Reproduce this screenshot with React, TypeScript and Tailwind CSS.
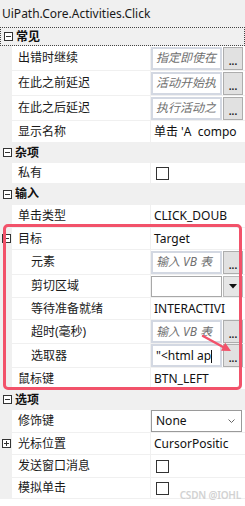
import React from "react";

const font = "font-['Noto_Sans','Noto_Sans_CJK_SC',sans-serif]";

const Toggle = ({ open }: { open: boolean }) => (
  <svg width="9" height="9" viewBox="0 0 9 9" className="block">
    <rect x="0.5" y="0.5" width="8" height="8" fill="white" stroke="#333" />
    <line x1="2" y1="4.5" x2="7" y2="4.5" stroke="#333" />
    {!open && <line x1="4.5" y1="2" x2="4.5" y2="7" stroke="#333" />}
  </svg>
);

const Header = ({ title, h, focused }: { title: string; h: string; focused?: boolean }) => (
  <div
    className={`flex items-center ${h} bg-[#f0f0f0] ${
      focused ? "border border-dotted border-[#444]" : "border-b border-[#f0f0f0]"
    }`}
  >
    <div className="w-[14px] flex justify-center pl-[1px]">
      <Toggle open />
    </div>
    <span className="text-[12px] font-bold text-[#111] pl-[1px]">{title}</span>
  </div>
);

const Row = ({
  name,
  h,
  sub,
  toggle,
  children,
}: {
  name: string;
  h: string;
  sub?: boolean;
  toggle?: "open" | "closed";
  children?: React.ReactNode;
}) => (
  <div className={`flex ${h} border-b border-[#f0f0f0]`}>
    <div className="w-[12px] shrink-0 bg-[#f0f0f0] flex items-center justify-center">
      {toggle && <Toggle open={toggle === "open"} />}
    </div>
    <div
      className={`w-[139px] shrink-0 bg-white border-r border-[#f0f0f0] flex items-center text-[12px] text-[#1a1a1a] ${
        sub ? "pl-[19px]" : "pl-[6px]"
      }`}
    >
      {name}
    </div>
    <div className="flex-1 bg-white flex items-center min-w-0">{children}</div>
  </div>
);

const Text = ({ v }: { v: string }) => (
  <div className="w-[76px] pl-[3px] whitespace-pre text-[12px] text-[#111]">{v}</div>
);

const Dots = () => (
  <div className="shrink-0 ml-[1px] w-[20px] h-[23px] bg-[#e1e1e1] border border-[#adadad] flex items-end justify-center pb-[3px]">
    <span className="text-[10px] leading-none font-bold text-[#222]">...</span>
  </div>
);

const Edit = ({ v, hint }: { v: string; hint?: boolean }) => (
  <div className="flex items-center">
    <div className="shrink-0 w-[71px] h-[23px] border-2 border-[#d3d8e2] bg-white flex items-center pl-[3px] whitespace-nowrap">
      {hint ? (
        <span className="italic text-[12px] text-[#707070]">{v}</span>
      ) : (
        <span className="text-[12px] text-[#111]">
          {v}
          <span className="inline-block w-px h-[13px] bg-[#111] align-middle" />
        </span>
      )}
    </div>
    <Dots />
  </div>
);

const Check = () => <div className="ml-[5px] w-[13px] h-[13px] border border-[#333] bg-white" />;

export default function App() {
  return (
    <div className={`relative w-[245px] h-[506px] bg-white overflow-hidden ${font}`}>
      <div className="h-[27px] bg-[#f0f0f0] flex items-center pl-[2px] text-[12px] text-[#1a1a1a]">
        UiPath.Core.Activities.Click
      </div>

      <Header title="常见" h="h-[19px]" focused />
      <Row name="出错时继续" h="h-[25px]">
        <Edit v="指定即使在" hint />
      </Row>
      <Row name="在此之前延迟" h="h-[25px]">
        <Edit v="活动开始执" hint />
      </Row>
      <Row name="在此之后延迟" h="h-[25px]">
        <Edit v="执行活动之" hint />
      </Row>
      <Row name="显示名称" h="h-[22px]">
        <Text v="单击 'A  compo" />
      </Row>

      <Header title="杂项" h="h-[20px]" />
      <Row name="私有" h="h-[21px]">
        <Check />
      </Row>

      <Header title="输入" h="h-[21px]" />
      <Row name="单击类型" h="h-[23px]">
        <Text v="CLICK_DOUB" />
      </Row>
      <Row name="目标" h="h-[22px]" toggle="open">
        <Text v="Target" />
      </Row>
      <Row name="元素" h="h-[25px]" sub>
        <Edit v="输入 VB 表" hint />
      </Row>
      <Row name="剪切区域" h="h-[23px]" sub>
        <div className="flex items-center">
          <div className="shrink-0 w-[71px] h-[21px] border border-[#a8a8a8] bg-white" />
          <div className="shrink-0 ml-[1px] w-[20px] h-[21px] bg-[#e6e6e6] border border-[#b8b8b8] flex items-center justify-center">
            <svg width="8" height="5" viewBox="0 0 8 5">
              <path d="M0 0 H8 L4 4.5 Z" fill="#111" />
            </svg>
          </div>
        </div>
      </Row>
      <Row name="等待准备就绪" h="h-[22px]" sub>
        <Text v="INTERACTIVI" />
      </Row>
      <Row name="超时(毫秒)" h="h-[24px]" sub>
        <Edit v="输入 VB 表" hint />
      </Row>
      <Row name="选取器" h="h-[24px]" sub>
        <Edit v={'"<html ap'} />
      </Row>
      <Row name="鼠标键" h="h-[22px]">
        <Text v="BTN_LEFT" />
      </Row>

      <Header title="选项" h="h-[20px]" />
      <Row name="修饰键" h="h-[23px]">
        <div className="w-[91px] h-[22px] border border-[#9a9a9a] bg-white flex items-center justify-between pl-[4px] pr-[6px]">
          <span className="text-[12px] text-[#111]">None</span>
          <svg width="7" height="4" viewBox="0 0 7 4">
            <path d="M0.5 0.5 L3.5 3.5 L6.5 0.5" fill="none" stroke="#666" />
          </svg>
        </div>
      </Row>
      <Row name="光标位置" h="h-[22px]" toggle="closed">
        <Text v="CursorPositic" />
      </Row>
      <Row name="发送窗口消息" h="h-[23px]">
        <Check />
      </Row>
      <Row name="模拟单击" h="h-[21px]">
        <Check />
      </Row>

      <div className="absolute left-[3px] top-[224px] w-[239px] h-[166px] border-[3px] border-[#f2526a] rounded-[5px]" />
      <svg className="absolute left-[195px] top-[328px]" width="45" height="30" viewBox="0 0 45 30">
        <line x1="8" y1="8" x2="29" y2="19.5" stroke="#f2526a" strokeWidth="2.5" strokeLinecap="round" />
        <path d="M36 23 L26 22.8 L30.2 14.8 Z" fill="#f2526a" />
      </svg>
      <div className="absolute right-[4px] top-[488px] whitespace-nowrap text-[10px] font-semibold tracking-[-0.2px] text-[#d2d2d2]">
        CSDN @IOHL
      </div>
    </div>
  );
}
